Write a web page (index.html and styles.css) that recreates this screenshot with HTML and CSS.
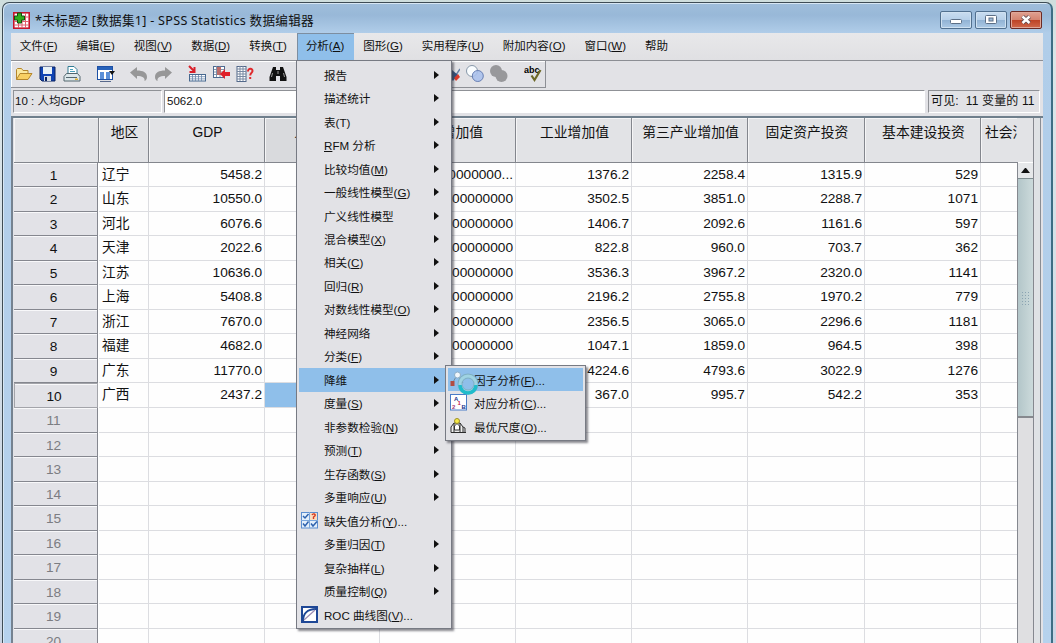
FILE: index.html
```html
<!DOCTYPE html>
<html lang="zh-CN">
<head>
    <meta charset="UTF-8">
    <title>SPSS Statistics 数据编辑器</title>
    <link rel="stylesheet" href="styles.css">
</head>
<body>
    <div class="window">
        <div class="titlebar">
            <svg class="app-icon" width="17" height="17" viewBox="0 0 17 17">
                <rect x="0.8" y="0.8" width="15.4" height="15.4" fill="#fff" stroke="#c8142c" stroke-width="1.6"/>
                <path d="M1 9.5h15M1 13h15M5.5 6v10M9 6v10M12.5 1v15M10 5h6" stroke="#e0606e" fill="none"/>
                <path d="M4.5 1h4v3h3v4h-3v3h-4v-3h-3v-4h3z" fill="#2fae1d" stroke="#164d10"/>
            </svg>
            <span class="title">*未标题2 [数据集1] - SPSS Statistics 数据编辑器</span>
            <div class="win-buttons">
                <span class="win-btn"><svg width="12" height="12"><rect x="0.5" y="5.5" width="11" height="4" rx="1" fill="#fff" stroke="#5c6f86"/></svg></span>
                <span class="win-btn"><svg width="12" height="12"><rect x="0.5" y="1.5" width="11" height="8" rx="1" fill="#fff" stroke="#5c6f86"/><rect x="4" y="4" width="4" height="3" fill="#9dbbd9" stroke="#5c6f86"/></svg></span>
                <span class="win-btn close"><svg width="12" height="12"><path d="M2.5 2.5l7 6.5M9.5 2.5l-7 6.5" stroke="#5d4a50" stroke-width="4.2"/><path d="M2.5 2.5l7 6.5M9.5 2.5l-7 6.5" stroke="#fff" stroke-width="2.4"/></svg></span>
            </div>
        </div>

        <div class="content">
            <div class="menubar">
                <span>文件(<u>F</u>)</span>
                <span>编辑(<u>E</u>)</span>
                <span>视图(<u>V</u>)</span>
                <span>数据(<u>D</u>)</span>
                <span>转换(<u>T</u>)</span>
                <span class="active">分析(<u>A</u>)</span>
                <span>图形(<u>G</u>)</span>
                <span>实用程序(<u>U</u>)</span>
                <span>附加内容(<u>O</u>)</span>
                <span>窗口(<u>W</u>)</span>
                <span>帮助</span>
            </div>

            <div class="toolbar">
                <!-- open -->
                <svg width="18" height="18" viewBox="0 0 18 18"><path d="M1.5 14.5v-10l1-1h4l1.5 2h5v3" fill="#fbe9a0" stroke="#b5862c"/><path d="M1.5 14.5l3.5-6h12l-4 6z" fill="#f8cf63" stroke="#b5862c"/></svg>
                <!-- save -->
                <svg width="18" height="18" viewBox="0 0 18 18"><path d="M1 2h15v14H3l-2-2z" fill="#1144b4" stroke="#0b2361"/><rect x="4" y="2" width="9" height="7" fill="#e8f1f6"/><rect x="5" y="11" width="7" height="5" fill="#d6dde4"/><rect x="6" y="12" width="2" height="4" fill="#0b2361"/></svg>
                <!-- print -->
                <svg width="18" height="18" viewBox="0 0 18 18"><path d="M5 9V1.5h6l3 3V9" fill="#fff" stroke="#327c94"/><path d="M7 4.5h3M7 6.5h5" stroke="#4aa0bb"/><path d="M3.5 8.5h11l2.5 3v4.5H1v-4.5z" fill="#dce7ea" stroke="#54676f"/><path d="M3 12.5h11" stroke="#54676f"/><rect x="12" y="13.5" width="3" height="1.5" fill="#e0b030"/></svg>
                <!-- recall dialog -->
                <svg class="gap-l" width="18" height="18" viewBox="0 0 18 18"><rect x="0.5" y="1.5" width="15" height="13" fill="#fff" stroke="#1d50a5"/><rect x="1" y="2" width="14" height="3" fill="#2862ba"/><path d="M3 7h4v7H3zM9 7h4v7H9z" fill="#5a8fd8"/><path d="M3 16.5h11" stroke="#58698c"/><path d="M12 6h6l-3 4z" fill="#111"/></svg>
                <!-- undo / redo -->
                <svg class="gap-l" width="18" height="18" viewBox="0 0 18 18"><path d="M0 7.5L7 2v3.5c6 0 10 2 10 6.500 0 2-1 3.500-2.500 4 .5-3.500-2-5-7.500-5V14z" fill="#979798"/></svg>
                <svg width="18" height="18" viewBox="0 0 18 18"><path d="M18 7.5L11 2v3.5C5 5.500 1 7.500 1 12c0 2 1 3.500 2.500 4-.5-3.500 2-5 7.500-5V14z" fill="#979798"/></svg>
                <!-- go to case -->
                <svg class="gap-l" width="18" height="18" viewBox="0 0 18 18"><path d="M1 1l5 5M6.5 2v5h-5" stroke="#d9202a" stroke-width="2" fill="none"/><rect x="1.5" y="9.5" width="16" height="6.5" fill="#fff" stroke="#47688f"/><path d="M2 11.7h15M2 13.9h15M4.5 10v6M7.5 10v6M10.5 10v6M13.5 10v6" stroke="#6987ab" stroke-width=".8"/></svg>
                <!-- go to variable -->
                <svg width="18" height="18" viewBox="0 0 18 18"><rect x="1.5" y="1.5" width="11" height="11" fill="#fff" stroke="#4d6a91"/><path d="M2 4.5h11M2 7h11M2 9.5h11M4.5 1v11M8 1v11" stroke="#7488a2" stroke-width=".9"/><rect x="5" y="2" width="4" height="8" fill="#bd6a68"/><path d="M8 9l5-5V7H18v4h-5v3z" fill="#df1f2a"/></svg>
                <!-- variables -->
                <svg width="18" height="18" viewBox="0 0 18 18"><rect x="1" y="1.5" width="9" height="15" fill="#fff" stroke="#52688a"/><path d="M1 4h9M1 6.5h9M1 9h9M1 11.5h9M1 14h9M4 1v15M7 1v15" stroke="#7889a2"/><path d="M12 6.5c0-4 5-3 4.5-.3-.2 1.6-2.3 1.6-2.3 4.3M14.2 12v2" stroke="#df2a2d" stroke-width="2" fill="none"/></svg>
                <!-- find -->
                <svg class="gap-l" width="18" height="18" viewBox="0 0 18 18"><path d="M4 2h3v3h4V2h3l3.5 10v4H11v-5H7v5H0.5v-4z" fill="#111"/><path d="M3.5 8l-1 4M14.5 8l1 4M9 6v3" stroke="#9a9a9a"/></svg>
                <!-- value labels, shown past the open menu -->
                <svg class="after-menu" width="18" height="18" viewBox="0 0 18 18"><path d="M8 6l6 4 4-6" fill="none" stroke="#6681a5" stroke-width="1.5"/><path d="M10 5l6 5-5 6-5-5z" fill="#34517e"/><path d="M12 13l4-4 2 3-4 4z" fill="#db3a2b"/></svg>
                <!-- variable sets -->
                <svg width="18" height="18" viewBox="0 0 18 18"><circle cx="6" cy="6" r="5.5" fill="#fafdff" stroke="#8797a9"/><circle cx="11.8" cy="11" r="5.5" fill="#a8bfec" fill-opacity=".85" stroke="#6980b4"/></svg>
                <svg width="18" height="18" viewBox="0 0 18 18"><circle cx="6" cy="6" r="6" fill="#98989b"/><circle cx="11.5" cy="11" r="6" fill="#98989b"/></svg>
                <!-- spelling -->
                <svg class="gap-l" width="20" height="18" viewBox="0 0 20 18"><text class="abc" x="0" y="8">abc</text><path d="M7.5 10.5l3 4.5L16.5 5" stroke="#6d6928" stroke-width="2.2" fill="none"/></svg>
            </div>

            <div class="cellbar">
                <div class="cell-name">10 : 人均GDP</div>
                <div class="cell-value">5062.0</div>
                <div class="visible-info">可见:&nbsp; 11 变量的 11</div>
            </div>

            <div class="sheet">
                <div class="grid">
                    <div class="grid-head">
                        <span></span><span>地区</span><span>GDP</span><span class="current">人均GDP</span><span>农业增加值</span>
                        <span>工业增加值</span><span>第三产业增加值</span><span>固定资产投资</span><span>基本建设投资</span><span class="cut">社会消费品</span>
                    </div>
                    <div id="rows"></div>
                </div>
                <div class="scrollbar">
                    <div class="scroll-corner"></div>
                    <div class="scroll-up"></div>
                    <div class="scroll-thumb"></div>
                </div>
                <div class="edge"></div>
            </div>
        </div>
    </div>

    <div class="menu" id="menu"></div>
    <div class="menu submenu" id="submenu"></div>

    <!-- busy cursor -->
    <svg class="busy" width="24" height="24" viewBox="0 0 24 24">
        <circle cx="12" cy="12" r="8" fill="none" stroke="#7fb0c4" stroke-width="5"/>
        <circle cx="12" cy="12" r="8" fill="none" stroke="#9fd3e2" stroke-width="3"/>
        <path d="M4 13a8 8 0 0 0 16 0" fill="none" stroke="#20bccb" stroke-width="3.5"/>
    </svg>

    <script>
        const rows = [
            ['辽宁', '5458.2', '', '0000000...', '1376.2', '2258.4', '1315.9', '529'],
            ['山东', '10550.0', '', '00000000', '3502.5', '3851.0', '2288.7', '1071'],
            ['河北', '6076.6', '', '00000000', '1406.7', '2092.6', '1161.6', '597'],
            ['天津', '2022.6', '', '00000000', '822.8', '960.0', '703.7', '362'],
            ['江苏', '10636.0', '', '00000000', '3536.3', '3967.2', '2320.0', '1141'],
            ['上海', '5408.8', '', '00000000', '2196.2', '2755.8', '1970.2', '779'],
            ['浙江', '7670.0', '', '00000000', '2356.5', '3065.0', '2296.6', '1181'],
            ['福建', '4682.0', '', '00000000', '1047.1', '1859.0', '964.5', '398'],
            ['广东', '11770.0', '', '', '4224.6', '4793.6', '3022.9', '1276'],
            ['广西', '2437.2', '', '', '367.0', '995.7', '542.2', '353']
        ];

        let html = '';
        for (let i = 0; i < 20; i++) {
            const data = rows[i] || [];
            let cls = i >= rows.length ? ' empty' : '';
            if (i === 9) cls = ' current';
            html += `<div class="grid-row${cls}"><span class="num">${i + 1}</span>`;
            for (let c = 0; c < 9; c++) {
                html += `<span>${data[c] || ''}</span>`;
            }
            html += '</div>';
        }
        document.getElementById('rows').innerHTML = html;

        const icon = (shapes) => `<svg class="item-icon" width="17" height="17" viewBox="0 0 17 17">${shapes}</svg>`;
        const checks = icon('<rect x="0.5" y="0.5" width="16" height="15.5" fill="#e3effb" stroke="#5b8ed0"/><rect x="9" y="1" width="7" height="7" fill="#f8dcc0"/><path d="M8.5 0v16M0 8.5h17" stroke="#7aa7dd"/><path d="M2 4l2 2 3.5-4M2 11.5l2 2.5 3.5-4.5M10 11.5l2 2.5 4-4.5" stroke="#2e62ae" stroke-width="1.5" fill="none"/><path d="M11 3c1-2 4-1 3 .8L12.5 5v2" stroke="#d53a21" stroke-width="1.4" fill="none"/>');
        const roc = icon('<rect x="1" y="1" width="15" height="15" fill="#fff" stroke="#1e4796" stroke-width="2"/><path d="M2 15C2 8 6 3 15 3" stroke="#1e4796" stroke-width="2" fill="none"/><path d="M3 14L14 4" stroke="#9a8bb3" stroke-width="1.2"/>');
        const factor = icon('<path d="M2 13L7 4l6 8" stroke="#718c9d" fill="none"/><rect x="0.5" y="10" width="4" height="5" fill="#b24c42"/><circle cx="7.5" cy="4" r="3" fill="#f1f7fb" stroke="#8badc7"/>');
        const corresp = icon('<rect x="0.5" y="0.5" width="16" height="15.5" fill="#fff" stroke="#4a7cc8"/><g class="tiny"><text x="4" y="6.5" fill="#20358c">A</text><text x="2" y="14.5" fill="#a63a78">2</text><text x="7.5" y="11" fill="#c32348">1</text><text x="11.5" y="14.5" fill="#20358c">B</text></g>');
        const scaling = icon('<path d="M1 14.5V9l3-4h6l3 4v5.5zM1 14.5h15M4 5v9M10 5v9" fill="#eee" stroke="#2c2c2c"/><path d="M4.5 12V8L7 5.5 9.5 8v4z" fill="#fff" stroke="#333"/><path d="M13 9l2 1v4" stroke="#333" fill="none"/><circle cx="7" cy="3" r="2.5" fill="#f7eb4a" stroke="#9c8f26"/>');

        // [label, hot key, icon]; entries with an icon open a dialog, not a submenu
        const items = [
            ['报告'], ['描述统计'], ['表(T)'], ['<u>R</u>FM 分析'], ['比较均值', 'M'], ['一般线性模型', 'G'],
            ['广义线性模型'], ['混合模型', 'X'], ['相关', 'C'], ['回归', 'R'], ['对数线性模型', 'O'], ['神经网络'],
            ['分类', 'F'], ['降维'], ['度量', 'S'], ['非参数检验', 'N'], ['预测', 'T'], ['生存函数', 'S'],
            ['多重响应', 'U'], ['缺失值分析', 'Y', checks], ['多重归因', 'T'], ['复杂抽样', 'L'], ['质量控制', 'Q'],
            ['ROC 曲线图', 'V', roc]
        ];
        const subItems = [['因子分析', 'F', factor], ['对应分析', 'C', corresp], ['最优尺度', 'O', scaling]];

        function renderMenu(id, list, active) {
            document.getElementById(id).innerHTML = list.map(([label, key, svg]) => {
                const text = label + (key ? `(<u>${key}</u>)` : '') + (svg ? '...' : '');
                const hot = label === active ? ' hot' : '';
                return `<div class="item${hot}">${svg || ''}<span>${text}</span>${svg ? '' : '<i class="arrow"></i>'}</div>`;
            }).join('');
        }

        renderMenu('menu', items, '降维');
        renderMenu('submenu', subItems, '因子分析');
    </script>
</body>
</html>
```
FILE: styles.css
```css
* {
    box-sizing: border-box;
}

body {
    margin: 0;
    width: 1056px;
    height: 643px;
    overflow: hidden;
    position: relative;
    padding: 2px 3px 0 2px;
    background: linear-gradient(#cfdedd 0, #dbe6e8 60px, #c9d4e4 100%);
    font-family: "Liberation Sans", "Noto Sans CJK SC", sans-serif;
    color: #111;
}

svg {
    display: block;
    flex: none;
}

.window {
    height: 650px;
    border: 1px solid #3f4d55;
    border-right: 2px solid #3c6d84;
    border-radius: 7px 7px 0 0;
    padding: 0 8px;
    background: linear-gradient(#a0bedb 0, #98b8d8 12px, #b0cde9 30px, #b6d2ed 100%);
    box-shadow: inset 1px 1px 0 #d7e7f4;
}

.titlebar {
    height: 30px;
    display: flex;
    align-items: center;
    padding: 4px 1px 0 2px;
}

.title {
    margin-left: 5px;
    padding-top: 2px;
    font-family: "Noto Sans", "Noto Sans CJK SC", sans-serif;
    font-size: 12.6px;
    letter-spacing: 0.27px;
    line-height: 18px;
    white-space: nowrap;
}

.win-buttons {
    display: flex;
    gap: 3px;
    margin-left: auto;
}

.win-btn {
    width: 32px;
    height: 18px;
    display: flex;
    align-items: center;
    justify-content: center;
    border: 1px solid #51708f;
    border-radius: 2px;
    background: linear-gradient(#c9ddf0 0, #b7d0e9 48%, #92b3d4 52%, #adcae6 100%);
    box-shadow: inset 0 0 0 1px #cfe1f1;
}

.win-btn.close {
    border-color: #6b2a25;
    background: linear-gradient(#e0a191 0, #d58470 48%, #bd4326 52%, #d0694c 100%);
    box-shadow: inset 0 0 0 1px #dfa798;
}

.content {
    height: 612px;
    background: #e2e2e6;
}

.menubar {
    height: 28px;
    display: flex;
    border-bottom: 1px solid #8c8e94;
    font-size: 11.5px;
    background: linear-gradient(#e8e8ea, #e0e0e3);
}

.menubar span {
    padding: 0 10.2px 0 8.8px;
    line-height: 27px;
    white-space: nowrap;
}

.menubar .active {
    background: #8fbfea;
    box-shadow: inset 1px 1px 0 #7d8ea0;
}

.toolbar {
    width: 535px;
    height: 27px;
    display: flex;
    align-items: center;
    gap: 6px;
    padding-left: 4px;
    border: 1px solid #8d8f95;
    border-width: 0 1px 1px 0;
    box-shadow: inset 1px 1px 0 #fff;
}

.toolbar .gap-l {
    margin-left: 9.6px;
}

.toolbar .after-menu {
    margin-left: 149px;
}

.abc {
    font: bold 9px "Liberation Sans", sans-serif;
}

.tiny {
    font: bold 6px "Liberation Sans", sans-serif;
}

.cellbar {
    height: 28px;
    display: flex;
    padding: 2px 3px 3px 2px;
    font-size: 11.5px;
    line-height: 21px;
}

.cellbar div {
    border: 1px solid #fff;
    border-top-color: #8f9196;
    border-left-color: #8f9196;
    white-space: nowrap;
    padding-left: 2px;
}

.cellbar .cell-name {
    width: 149px;
    padding-left: 1px;
}

.cellbar .cell-value {
    flex: 1;
    margin: 0 3px 0 2px;
    background: #fff;
}

.cellbar .visible-info {
    width: 112px;
    font-size: 12px;
    letter-spacing: 0.15px;
}

.sheet {
    height: 530px;
    display: flex;
    border-top: 2px solid #6f7f8c;
    border-left: 2px solid #758290;
    padding-left: 1px;
}

.grid {
    width: 1003px;
    overflow: hidden;
    background: #fefefe;
}

.grid-head,
.grid-row {
    display: grid;
    grid-template-columns: 85px 50px 116px 115px 136px 116px 116px 117px 116px 36px;
    white-space: nowrap;
}

.grid-head {
    height: 44.5px;
    background: #e2e3e6;
    font-size: 13.8px;
}

.grid-head span {
    padding: 5px 0 0 2px;
    line-height: 20px;
    text-align: center;
    border-right: 1px solid #83868d;
    border-bottom: 1px solid #83868d;
    box-shadow: inset 1px 1px 0 #f5f5f6;
    overflow: hidden;
}

.grid-head .current {
    background: #d9dadd;
}

.grid-head .cut {
    text-align: left;
    padding-left: 4px;
    border-right: none;
}

.grid-row {
    height: 24.55px;
    font-size: 13.7px;
    line-height: 23px;
}

.grid-row span {
    border-right: 1px solid #dcdde1;
    border-bottom: 1px solid #dcdde1;
    padding-right: 2px;
    text-align: right;
    overflow: hidden;
}

.grid-row span:nth-child(2) {
    text-align: left;
    padding-left: 3px;
}

.grid-row span:last-child {
    border-right: none;
}

.grid-row .num {
    margin-right: 1px;
    padding-right: 4px;
    text-align: center;
    line-height: 25px;
    background: #e2e2e7;
    border-right: 1px solid #85878f;
    border-bottom: 1px solid #85878f;
    box-shadow: inset 0 1px 0 #f8f8fa;
}

.grid-row.empty .num {
    color: #7c7d82;
}

.grid-row.current .num {
    border: 1px solid #a3a4aa;
}

.grid-row.current span:nth-child(4) {
    background: #8fbfea;
}

.scrollbar {
    width: 17px;
    border-right: 1px solid #85888f;
    border-left: 1px solid #85888f;
    background: #dfdfe1;
}

.scroll-corner {
    height: 44px;
    margin-left: -1px;
    background: #e2e3e6;
}

.scroll-up {
    height: 17px;
    background: #e6e8ea;
    border-top: 1px solid #fff;
    border-bottom: 1px solid #7f8d90;
    padding: 5px 3px;
}

.scroll-up::before {
    content: "";
    display: block;
    border: 4.5px solid transparent;
    border-top: none;
    border-bottom: 5px solid #111;
}

.scroll-thumb {
    height: 239px;
    padding: 112px 3px;
    border-bottom: 2px solid #86898e;
    background: linear-gradient(90deg, #b3c6c9, #ccdadb);
}

.scroll-thumb::before {
    content: "";
    display: block;
    height: 14px;
    background: radial-gradient(circle, #8ba4b2 0.8px, transparent 1px) 0 0 / 3px 3px;
}

.edge {
    flex: 1;
    margin: 0 2px 0 1px;
    border-right: 1px solid #898d94;
    background: #dfe2e5;
}

.menu {
    position: absolute;
    left: 296px;
    top: 60px;
    width: 156px;
    height: 569px;
    padding: 2px;
    border: 1px solid #777a83;
    background: #e2e2e6;
    box-shadow: 2px 2px 2px rgba(60, 60, 70, 0.6);
    font-size: 11.6px;
}

.item {
    position: relative;
    display: flex;
    align-items: center;
    height: 23.48px;
    padding-left: 25px;
    white-space: nowrap;
}

.item.hot {
    background: #8fbfea;
}

.item-icon {
    position: absolute;
    left: 2px;
    top: 3px;
}

.arrow {
    margin-left: auto;
    margin-right: 10px;
    border: 4.5px solid transparent;
    border-left: 5px solid #111;
    border-right: none;
}

.submenu {
    left: 445px;
    top: 365px;
    width: 141px;
    height: 76px;
}

.submenu .item {
    padding-left: 26px;
}

.busy {
    position: absolute;
    left: 456px;
    top: 372px;
}
```
